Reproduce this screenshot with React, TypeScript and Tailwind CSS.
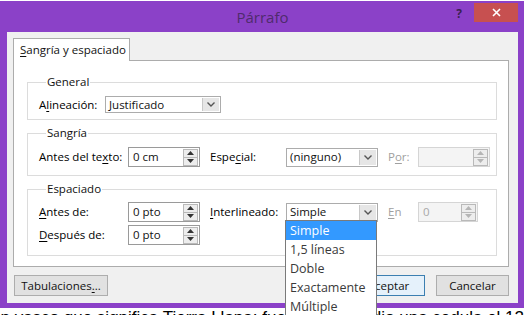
import type { ReactNode } from 'react';

const FONT = { fontFamily: '"Open Sans", "Noto Sans", sans-serif' };

function Spinner({ disabled }: { disabled?: boolean }) {
  const fill = disabled ? '#b5b5b5' : '#333';
  return (
    <div className="mr-[1px] flex h-[17px] w-[15px] flex-col border border-[#b9b9b9] bg-[#ededed]">
      <div className="flex flex-1 items-center justify-center border-b border-[#b9b9b9]">
        <svg width="7" height="4" viewBox="0 0 7 4">
          <path d="M0 4 L3.5 0 L7 4 Z" fill={fill} />
        </svg>
      </div>
      <div className="flex flex-1 items-center justify-center">
        <svg width="7" height="4" viewBox="0 0 7 4">
          <path d="M0 0 L3.5 4 L7 0 Z" fill={fill} />
        </svg>
      </div>
    </div>
  );
}

function SpinInput({ value, width = 'w-[72px]' }: { value: string; width?: string }) {
  return (
    <div className={`flex h-[20px] ${width} items-center border border-[#9a9a9a] bg-white`}>
      <span className="flex-1 pl-[4px] text-[#111]">{value}</span>
      <Spinner />
    </div>
  );
}

function DisabledSpin({ value, width }: { value: string; width: string }) {
  return (
    <div className={`flex h-[20px] ${width} items-center border border-[#d5d5d5] bg-[#f4f4f4]`}>
      <span className="flex-1 pl-[4px] text-[#a8a8a8]">{value}</span>
      <Spinner disabled />
    </div>
  );
}

function Chevron() {
  return (
    <svg width="8" height="5" viewBox="0 0 8 5">
      <path d="M0.5 0.5 L4 4 L7.5 0.5" fill="none" stroke="#555" strokeWidth="1.4" />
    </svg>
  );
}

function Select({ value, width, height = 'h-[19px]' }: { value: string; width: string; height?: string }) {
  return (
    <div className={`flex ${height} ${width} items-stretch border border-[#acacac] bg-white`}>
      <span className="flex flex-1 items-center pl-[3px] text-[#111]">{value}</span>
      <div className="m-[1px] flex w-[17px] items-center justify-center border-l border-[#c8c8c8] bg-[#e6e6e6]">
        <Chevron />
      </div>
    </div>
  );
}

function Group({ title, children, className }: { title: string; children: ReactNode; className: string }) {
  return (
    <fieldset className={`border border-[#dcdcdc] pl-[11px] ${className}`}>
      <legend className="ml-[7px] px-[1px] leading-[16px] text-[#111]">{title}</legend>
      {children}
    </fieldset>
  );
}

export default function App() {
  return (
    <div className="relative h-[315px] w-[526px] overflow-hidden bg-white text-[11.5px]" style={FONT}>
      {/* dialog frame */}
      <div className="mt-[1px] flex h-[307px] w-[524px] flex-col bg-[#8b41c8] pb-[5px] pl-[7px] pr-[6px]">
        {/* title bar */}
        <div className="flex h-[31px] shrink-0">
          <div className="w-[68px]" />
          <div className="flex flex-1 items-center justify-center pt-[1px] text-[15px] text-[#4f2b6c]">
            Párrafo
          </div>
          <div className="flex w-[68px] items-start justify-end pt-[2px]">
            <span className="mr-[12px] mt-[2px] text-[12px] font-bold text-[#3b2152]">?</span>
            <div className="flex h-[19px] w-[44px] items-center justify-center bg-[#c75050]">
              <svg width="9" height="9" viewBox="0 0 9 9">
                <path d="M1 1 L8 8 M8 1 L1 8" stroke="#fff" strokeWidth="1.6" />
              </svg>
            </div>
          </div>
        </div>

        {/* client area */}
        <div className="flex flex-1 flex-col bg-[#f0f0f0] pl-[6px] pr-[9px] pt-[6px]">
          {/* tab strip */}
          <div className="flex">
            <div className="relative z-10 -mb-px flex h-[23px] w-[117px] items-center border border-b-0 border-[#acacac] bg-white pl-[6px] text-[#111]">
              <span>
                <u className="underline-offset-2">S</u>angría y espaciado
              </span>
            </div>
          </div>

          {/* tab panel */}
          <div className="flex h-[207px] flex-col gap-[5px] border border-[#acacac] bg-white pl-[13px] pr-[11px] pt-[13px]">
            <Group title="General" className="h-[46px] pt-[6px]">
              <div className="flex items-center">
                <span className="w-[66px]">
                  A<u className="underline-offset-2">l</u>ineación:
                </span>
                <Select value="Justificado" width="w-[116px]" height="h-[17px]" />
              </div>
            </Group>

            <Group title="Sangría" className="h-[51px] pt-[6px]">
              <div className="flex items-center">
                <span className="w-[89px]">
                  Antes del te<u className="underline-offset-2">x</u>to:
                </span>
                <SpinInput value="0 cm" />
                <span className="ml-[10px] w-[76px]">
                  Espe<u className="underline-offset-2">c</u>ial:
                </span>
                <Select value="(ninguno)" width="w-[92px]" />
                <span className="ml-[10px] w-[30px] text-[#a0a0a0]">
                  P<u className="underline-offset-2">o</u>r:
                </span>
                <DisabledSpin value="" width="w-[72px]" />
              </div>
            </Group>

            <Group title="Espaciado" className="h-[75px] pt-[5px]">
              <div className="flex flex-col gap-[3px]">
                <div className="flex items-center">
                  <span className="w-[89px]">
                    <u className="underline-offset-2">A</u>ntes de:
                  </span>
                  <SpinInput value="0 pto" />
                  <span className="ml-[10px] w-[76px]">
                    <u className="underline-offset-2">I</u>nterlineado:
                  </span>
                  <Select value="Simple" width="w-[92px]" />
                  <span className="ml-[10px] w-[30px] text-[#a0a0a0]">
                    <u className="underline-offset-2">E</u>n
                  </span>
                  <DisabledSpin value="0" width="w-[60px]" />
                </div>
                <div className="flex items-center">
                  <span className="w-[89px]">
                    <u className="underline-offset-2">D</u>espués de:
                  </span>
                  <SpinInput value="0 pto" />
                </div>
              </div>
            </Group>
          </div>

          {/* buttons */}
          <div className="mt-[8px] flex items-center">
            <button className="ml-px h-[21px] w-[94px] border border-[#adadad] bg-[#e1e1e1] text-[#111]">
              Tabulaciones<u className="underline-offset-2">.</u>..
            </button>
            <div className="flex-1" />
            <button className="h-[21px] w-[73px] border border-[#3c7fb1] bg-[#e5f1fb] text-[#111]">
              Aceptar
            </button>
            <button className="ml-[11px] h-[21px] w-[73px] border border-[#adadad] bg-[#e1e1e1] text-[#111]">
              Cancelar
            </button>
          </div>
        </div>
      </div>

      {/* document text behind the dialog */}
      <div
        className="-mt-[2px] flex justify-between whitespace-nowrap pr-[2px] text-[17px] leading-[24px] text-black"
        style={{ fontFamily: '"Liberation Sans", Arial, sans-serif' }}
      >
        <span className="-ml-[9px]">en vasco que significa Tierra Llana; fue</span>
        <span>lo dio una cedula el 12</span>
      </div>

      {/* open drop-down list of Interlineado */}
      <div className="absolute left-[285px] top-[220px] w-[92px] border border-[#7a7a7a] bg-white text-[12.5px] text-[#3a3a3a]">
        <div className="h-[19px] bg-[#3399ff] pl-[4px] leading-[19px] text-white">Simple</div>
        <div className="h-[19px] pl-[4px] leading-[19px]">1,5 líneas</div>
        <div className="h-[19px] pl-[4px] leading-[19px]">Doble</div>
        <div className="h-[19px] pl-[4px] leading-[19px]">Exactamente</div>
        <div className="h-[19px] pl-[4px] leading-[19px]">Múltiple</div>
      </div>
    </div>
  );
}
